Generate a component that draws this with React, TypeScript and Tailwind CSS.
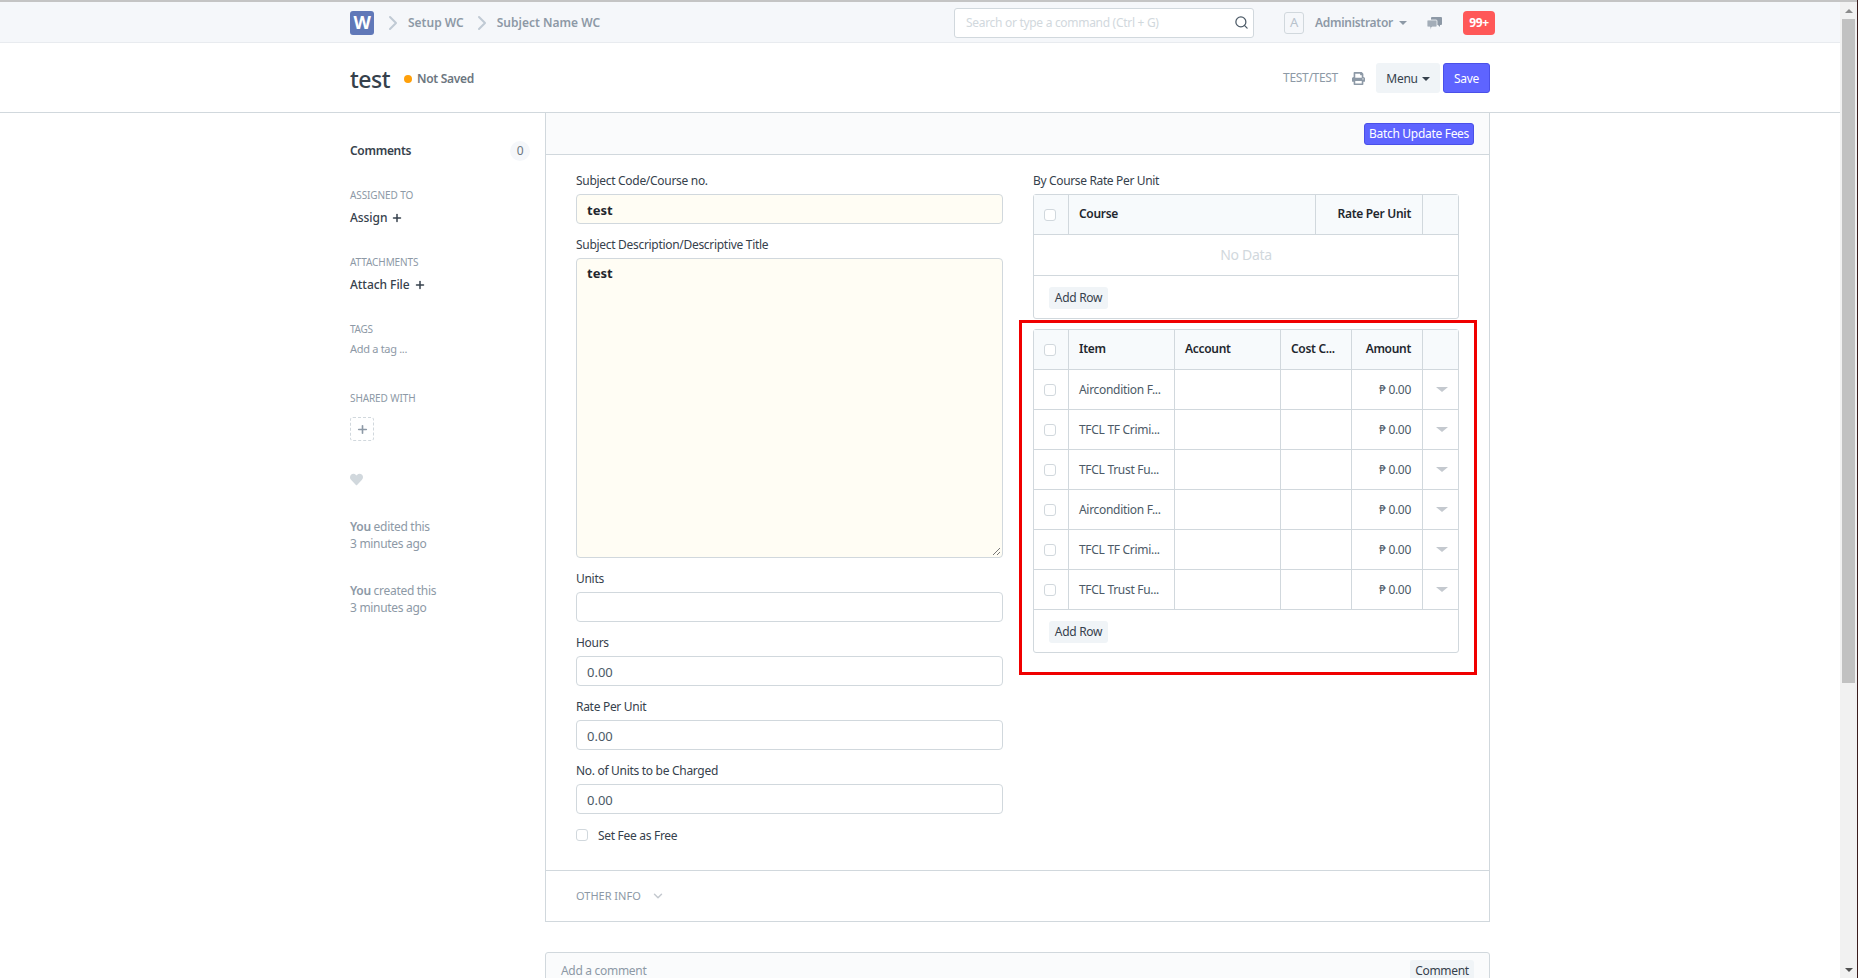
import React from 'react'
import { ChevronRight, ChevronDown, Plus, Search } from 'lucide-react'
import { FaHeart, FaPrint } from 'react-icons/fa'

const font = { fontFamily: '"Noto Sans", sans-serif' }

function Caret({ className }: { className: string }) {
  return <span className={`inline-block w-0 h-0 border-x-[4px] border-x-transparent border-t-[4px] ${className}`} />
}

function Check() {
  return <span className="block w-[12px] h-[12px] rounded-[3px] border border-[#d1d8dd] bg-white" />
}

function ChatIcon() {
  return (
    <svg className="ml-[20px] mt-[1px]" width="15" height="15" viewBox="0 0 15 15">
      <path d="M5 1h9a1 1 0 0 1 1 1v6a1 1 0 0 1-1 1h-1v2l-2-2H5a1 1 0 0 1-1-1V2a1 1 0 0 1 1-1z" fill="#8d99a6" />
      <path d="M1 4h8a1 1 0 0 1 1 1v5a1 1 0 0 1-1 1H5l-2 3v-3H1a1 1 0 0 1-1-1V5a1 1 0 0 1 1-1z" fill="#a3adb8" stroke="#f5f7fa" strokeWidth="0.8" />
    </svg>
  )
}

function Field({ label, value, bold, tall }: { label: string; value?: string; bold?: boolean; tall?: boolean }) {
  return (
    <div className="mb-[13px]">
      <div className="h-[16px] mb-[5px] text-[12px] leading-[16px] text-[#36414c]">{label}</div>
      <div
        className={`rounded-[4px] border border-[#d1d8dd] px-[10px] text-[13px] tracking-normal ${tall ? 'h-[300px] py-[4px] leading-[20px] relative' : 'h-[30px] leading-[30px]'} ${bold ? 'bg-[#fffdf4] font-bold text-[#1f272e]' : 'bg-white text-[#4c5a67]'}`}
      >
        {value}
        {tall && (
          <svg className="absolute right-[1px] bottom-[1px]" width="9" height="9" viewBox="0 0 9 9">
            <path d="M1 8 8 1M5 8l3-3" stroke="#777" strokeWidth="1" />
          </svg>
        )}
      </div>
    </div>
  )
}

function AddRow() {
  return (
    <div className="pl-[15px] pt-[11px] pb-[9px]">
      <button className="block h-[22px] w-[59px] rounded-[3px] bg-[#f0f4f7] text-[12px] leading-[22px] text-[#36414c]">Add Row</button>
    </div>
  )
}

const rows = ['Aircondition F...', 'TFCL TF Crimi...', 'TFCL Trust Fu...', 'Aircondition F...', 'TFCL TF Crimi...', 'TFCL Trust Fu...']

function HeaderRow({ cols }: { cols: { label: string; w: string; right?: boolean }[] }) {
  return (
    <div className="flex h-[40px] border-b border-[#d1d8dd] bg-[#f7fafc] text-[12px] font-semibold text-[#1f272e]">
      <div className="w-[35px] flex items-center justify-center border-r border-[#d1d8dd] pr-[3px]"><Check /></div>
      {cols.map(c => (
        <div key={c.label} className={`${c.w} flex items-center border-r border-[#d1d8dd] pb-[1px] pl-[10px] pr-[11px] ${c.right ? 'justify-end' : ''}`}>{c.label}</div>
      ))}
      <div className="flex-1" />
    </div>
  )
}

export default function App() {
  return (
    <div className="relative flex h-[978px] w-[1858px] overflow-hidden bg-white tracking-[-0.3px]" style={font}>
      <div className="w-[1840px] shrink-0">
        {/* Navbar */}
        <div className="h-[2px] bg-[#c4c4c4]" />
        <header className="flex h-[41px] items-center border-b border-[#e8ebef] bg-[#f5f7fa] pl-[350px] pr-[345px] pt-[1px]">
          <div className="flex h-[24px] w-[24px] items-center justify-center rounded-[3px] bg-[#6078b8] text-[18px] font-bold text-white">W</div>
          <ChevronRight className="ml-[7px] text-[#c0cad4]" size={24} strokeWidth={2} />
          <span className="ml-[3px] text-[12px] font-semibold tracking-normal text-[#8d99a6]">Setup WC</span>
          <ChevronRight className="ml-[6px] text-[#c0cad4]" size={24} strokeWidth={2} />
          <span className="ml-[3px] text-[12px] font-semibold tracking-normal text-[#8d99a6]">Subject Name WC</span>
          <div className="ml-auto flex h-[30px] w-[300px] items-center justify-between rounded-[3px] border border-[#d1d8dd] bg-white pl-[11px] pr-[4px] text-[12px] text-[#d1d8dd]">
            <span>Search or type a command (Ctrl + G)</span>
            <Search size={15} className="text-[#4c5a67]" />
          </div>
          <div className="ml-[30px] flex h-[22px] w-[20px] items-center justify-center rounded-[3px] border border-[#d1d8dd] text-[13px] text-[#b8c2cc]">A</div>
          <span className="ml-[11px] w-[78px] whitespace-nowrap text-[12px] font-semibold text-[#8d99a6]">Administrator</span>
          <Caret className="ml-[6px] border-t-[#8d99a6]" />
          <ChatIcon />
          <div className="ml-[21px] flex h-[24px] w-[32px] items-center justify-center rounded-[4px] bg-[#ff5858] text-[12px] font-bold text-white">99+</div>
        </header>

        {/* Page head */}
        <div className="flex h-[70px] items-center border-b border-[#d1d8dd] pl-[350px] pt-[1px]">
          <span className="mt-[3px] text-[23px] font-medium tracking-[-0.5px] text-[#36414c]">test</span>
          <span className="ml-[14px] mt-[2px] h-[8px] w-[8px] rounded-full bg-[#ffa00a]" />
          <span className="ml-[5px] mt-[2px] text-[12px] font-semibold text-[#6c7680]">Not Saved</span>
          <span className="ml-auto text-[12px] text-[#8d99a6]">TEST/TEST</span>
          <FaPrint size={13} className="ml-[14px] text-[#8d99a6]" />
          <button className="ml-[11px] flex h-[30px] w-[64px] items-center justify-center gap-[4px] rounded-[3px] bg-[#f0f4f7] pt-[1px] text-[12px] text-[#36414c]">Menu <Caret className="border-t-[#36414c]" /></button>
          <button className="ml-[3px] mr-[350px] h-[30px] w-[47px] rounded-[3px] border border-[#4a50e8] bg-[#5e64ff] pt-[1px] text-[12px] text-white">Save</button>
        </div>

        <div className="flex pl-[350px]">
          {/* Sidebar */}
          <aside className="w-[195px] shrink-0 text-[12px] text-[#8d99a6]">
            <div className="mt-[28px] flex h-[20px] items-center justify-between pr-[15px]">
              <span className="font-semibold text-[#36414c]">Comments</span>
              <span className="flex h-[20px] w-[20px] items-center justify-center rounded-full bg-[#f5f7fa] text-[#6c7680]">0</span>
            </div>
            <div className="mt-[26px] h-[16px] text-[10px] leading-[16px] tracking-[-0.1px]">ASSIGNED TO</div>
            <div className="mt-[7px] flex h-[16px] items-center gap-[4px] font-medium tracking-[-0.05px] text-[#36414c]">Assign <Plus size={12} strokeWidth={3} /></div>
            <div className="mt-[28px] h-[16px] text-[10px] leading-[16px] tracking-[-0.1px]">ATTACHMENTS</div>
            <div className="mt-[7px] flex h-[16px] items-center gap-[4px] font-medium tracking-[-0.05px] text-[#36414c]">Attach File <Plus size={12} strokeWidth={3} /></div>
            <div className="mt-[28px] h-[16px] text-[10px] leading-[16px]">TAGS</div>
            <div className="mt-[4px] h-[16px] leading-[16px] text-[11px]">Add a tag ...</div>
            <div className="mt-[33px] h-[16px] text-[10px] leading-[16px] tracking-[-0.1px]">SHARED WITH</div>
            <div className="mt-[11px] flex h-[24px] w-[24px] items-center justify-center rounded-[3px] border border-dashed border-[#d1d8dd] text-[#8d99a6]"><Plus size={13} strokeWidth={3} /></div>
            <FaHeart size={13} className="mt-[32px] text-[#d1d8dd]" />
            <div className="mt-[32px] leading-[17px]"><b className="font-semibold">You</b> edited this<br />3 minutes ago</div>
            <div className="mt-[30px] leading-[17px]"><b className="font-semibold">You</b> created this<br />3 minutes ago</div>
          </aside>

          {/* Form */}
          <main className="w-[945px] shrink-0">
            <section className="border-x border-b border-[#d1d8dd]">
              <div className="flex h-[42px] items-center justify-end border-b border-[#d1d8dd] bg-[#fafbfc] pr-[15px]">
                <button className="h-[22px] w-[110px] rounded-[3px] border border-[#4a50e8] bg-[#5e64ff] text-[12px] text-white">Batch Update Fees</button>
              </div>
              <div className="grid grid-cols-[427px_426px] gap-x-[30px] px-[30px] pt-[18px]">
                <div>
                  <Field label="Subject Code/Course no." value="test" bold />
                  <Field label="Subject Description/Descriptive Title" value="test" bold tall />
                  <Field label="Units" />
                  <Field label="Hours" value="0.00" />
                  <Field label="Rate Per Unit" value="0.00" />
                  <Field label="No. of Units to be Charged" value="0.00" />
                  <div className="flex h-[16px] items-center gap-[10px] mt-[2px] text-[12px] text-[#36414c]"><Check /> <span className="pt-[1px]">Set Fee as Free</span></div>
                </div>
                <div>
                  <div className="h-[16px] mb-[5px] text-[12px] leading-[16px] tracking-[-0.35px] text-[#36414c]">By Course Rate Per Unit</div>
                  <div className="rounded-[3px] border border-[#d1d8dd]">
                    <HeaderRow cols={[{ label: 'Course', w: 'w-[247px]' }, { label: 'Rate Per Unit', w: 'w-[107px]', right: true }]} />
                    <div className="flex h-[41px] items-center justify-center border-b border-[#d1d8dd] pb-[1px] text-[14px] text-[#d1d8dd]">No Data</div>
                    <AddRow />
                  </div>
                  <div className="relative mt-[10px]">
                    <div className="rounded-[3px] border border-[#d1d8dd]">
                      <HeaderRow cols={[{ label: 'Item', w: 'w-[106px]' }, { label: 'Account', w: 'w-[106px]' }, { label: 'Cost C...', w: 'w-[71px]' }, { label: 'Amount', w: 'w-[71px]', right: true }]} />
                      {rows.map((r, i) => (
                        <div key={i} className="flex h-[40px] border-b border-[#d1d8dd] text-[12px] text-[#4c5a67]">
                          <div className="w-[35px] flex items-center justify-center border-r border-[#d1d8dd] pr-[3px]"><Check /></div>
                          <div className="w-[106px] flex items-center border-r border-[#d1d8dd] px-[10px] whitespace-nowrap">{r}</div>
                          <div className="w-[106px] border-r border-[#d1d8dd]" />
                          <div className="w-[71px] border-r border-[#d1d8dd]" />
                          <div className="w-[71px] flex items-center justify-end border-r border-[#d1d8dd] pl-[10px] pr-[11px]">₱ 0.00</div>
                          <div className="flex flex-1 items-center justify-center pl-[2px]"><span className="h-0 w-0 border-x-[6px] border-t-[5px] border-x-transparent border-t-[#c4c9cf]" /></div>
                        </div>
                      ))}
                      <AddRow />
                    </div>
                    {/* red annotation over the table */}
                    <div className="pointer-events-none absolute -top-[9px] -left-[14px] -right-[18px] -bottom-[22px] border-[3px] border-[#f00000]" />
                  </div>
                </div>
              </div>
              <div className="mt-[27px] flex h-[51px] items-center gap-[10px] border-t border-[#d1d8dd] pl-[30px] text-[11px] tracking-normal text-[#8d99a6]">
                OTHER INFO <ChevronDown size={14} className="text-[#c4c9cf]" strokeWidth={2.5} />
              </div>
            </section>
            <div className="mt-[30px] flex h-[60px] items-start justify-between rounded-t-[3px] border border-[#d1d8dd] bg-[#fafbfc] pl-[15px] pr-[15px] pt-[7px] text-[12px]">
              <span className="mt-[4px] leading-[14px] text-[#8d99a6]">Add a comment</span>
              <button className="flex h-[26px] w-[64px] items-start justify-center rounded-[3px] bg-[#f0f4f7] pt-[4px] leading-[14px] text-[#36414c]">Comment</button>
            </div>
          </main>
        </div>
      </div>

      {/* Browser scrollbar */}
      <div className="relative flex w-[17px] shrink-0 flex-col items-center bg-[#f1f1f1]">
        <div className="h-[2px] w-full bg-[#c4c4c4]" />
        <div className="flex h-[17px] items-center justify-center"><span className="h-0 w-0 border-x-[4px] border-b-[4px] border-x-transparent border-b-[#8a8a8a]" /></div>
        <div className="h-[664px] w-[13px] bg-[#c1c1c1]" />
        <div className="mt-auto flex h-[17px] items-center justify-center"><span className="h-0 w-0 border-x-[4px] border-t-[4px] border-x-transparent border-t-[#505050]" /></div>
      </div>
      <div className="w-[1px] shrink-0 bg-[#3a1c1c]" />
    </div>
  )
}
